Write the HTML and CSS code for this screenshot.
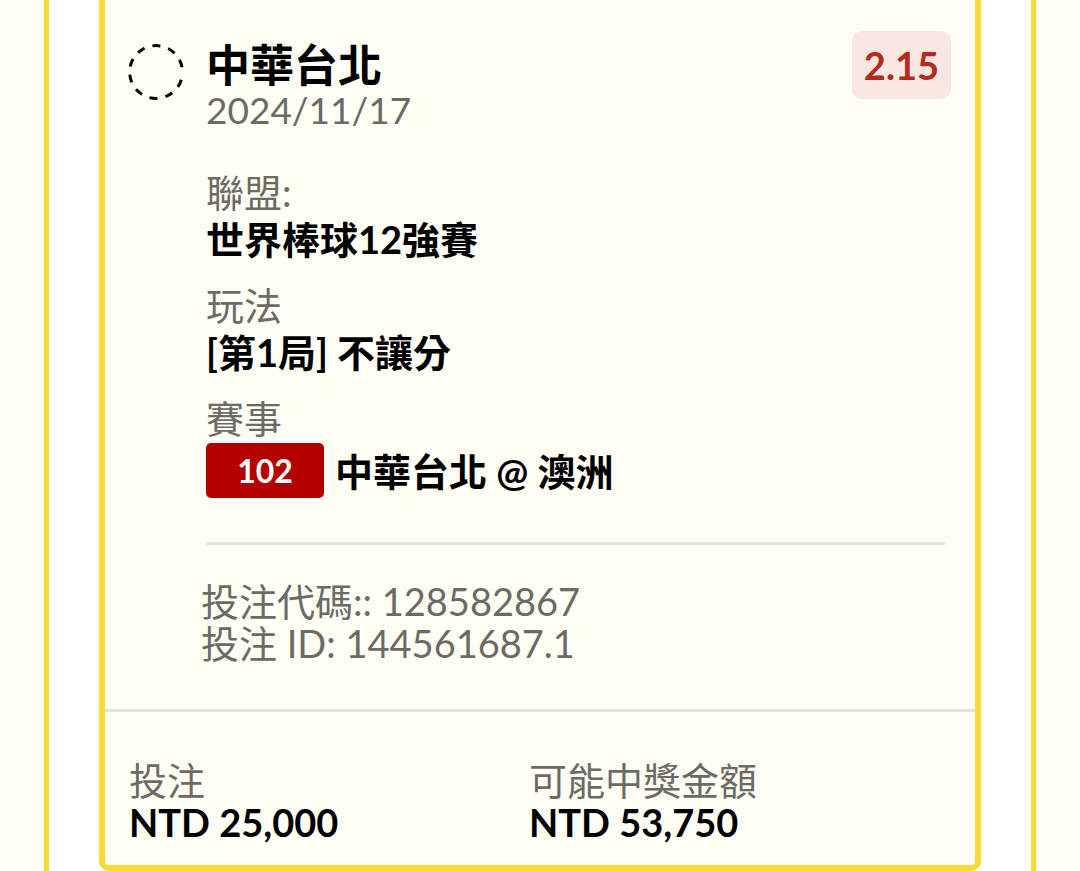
FILE: index.html
```html
<!DOCTYPE html>
<html lang="zh-TW">

<head>
    <meta charset="UTF-8">
    <meta name="viewport" content="width=device-width, initial-scale=1.0">
    <title>投注</title>
    <link rel="stylesheet" href="styles.css">
</head>

<body>
    <main class="slip">
        <article class="card">
            <section class="bet">
                <svg class="status" viewBox="0 0 56 56" aria-hidden="true">
                    <path d="M53.3 35.7A26.4 26.4 0 1 1 54 23.2" pathLength="327.5" />
                </svg>

                <div class="bet-body">
                    <header class="bet-header">
                        <div>
                            <h1>中華台北</h1>
                            <time class="date" datetime="2024-11-17">2024/11/17</time>
                        </div>
                        <span class="odds">2.15</span>
                    </header>

                    <dl class="details">
                        <div>
                            <dt>聯盟:</dt>
                            <dd>世界棒球12強賽</dd>
                        </div>
                        <div>
                            <dt>玩法</dt>
                            <dd>[第1局] 不讓分</dd>
                        </div>
                        <div>
                            <dt>賽事</dt>
                            <dd class="match"><span class="match-no">102</span>中華台北 @ 澳洲</dd>
                        </div>
                    </dl>
                </div>

                <div class="codes">
                    <p>投注代碼:: 128582867</p>
                    <p>投注 ID: 144561687.1</p>
                </div>
            </section>

            <dl class="totals">
                <div>
                    <dt>投注</dt>
                    <dd>NTD 25,000</dd>
                </div>
                <div>
                    <dt>可能中獎金額</dt>
                    <dd>NTD 53,750</dd>
                </div>
            </dl>
        </article>
    </main>
</body>

</html>
```
FILE: styles.css
```css
:root {
    --yellow: #f9d933;
    --cream: #fffef5;
    --grey: #6b6a65;
    --line: #e5e3dd;
}

* {
    box-sizing: border-box;
}

body {
    margin: 0;
    background: var(--cream);
    color: #000;
    font-family: Lato, "Noto Sans CJK TC", sans-serif;
    font-size: 38px;
    line-height: 42px;
}

h1,
p,
dl,
dd {
    margin: 0;
}

.slip {
    min-height: 100vh;
    margin: 0 44px;
    padding: 0 50px;
    background: #fff;
    border: solid var(--yellow);
    border-width: 0 5px;
}

.card {
    background: var(--cream);
    border: 6px solid var(--yellow);
    border-top: 0;
    border-radius: 0 0 10px 10px;
}

.bet {
    display: grid;
    grid-template-columns: 56px 1fr;
    column-gap: 22px;
    padding: 31px 30px 45px 23px;
    border-bottom: 3px solid var(--line);
}

/* 未結算狀態的虛線圓圈 */
.status {
    width: 56px;
    height: 56px;
    margin-top: 13px;
    fill: none;
    stroke: #000;
    stroke-width: 3;
    stroke-dasharray: 17 17.5;
}

.bet-body {
    padding-bottom: 44px;
    border-bottom: 3px solid var(--line);
}

.bet-header {
    display: flex;
    justify-content: space-between;
    align-items: flex-start;
}

h1 {
    margin-top: 10px;
    font-size: 44px;
    line-height: 48px;
}

.date {
    display: block;
    color: var(--grey);
    font-size: 37px;
}

.odds {
    margin-right: -6px;
    padding: 13px 12px;
    border-radius: 10px;
    background: #f7e7e0;
    color: #b22a20;
    font-weight: bold;
}

.details {
    display: grid;
    gap: 22px;
    margin-top: 40px;
}

dt {
    color: var(--grey);
}

dd {
    font-weight: bold;
}

.details dd {
    padding-top: 3px;
    line-height: 46px;
}

.details .match {
    display: flex;
    align-items: center;
    gap: 11px;
    padding-top: 4px;
}

.match-no {
    width: 118px;
    border-radius: 5px;
    background: #b50000;
    color: #fff;
    font-size: 32px;
    line-height: 55px;
    text-align: center;
}

.codes {
    grid-column: 2;
    margin: 35px 0 0 -5px;
    color: var(--grey);
}

.totals {
    display: grid;
    grid-template-columns: 1fr 1fr;
    padding: 47px 46px 22px 24px;
}
```
